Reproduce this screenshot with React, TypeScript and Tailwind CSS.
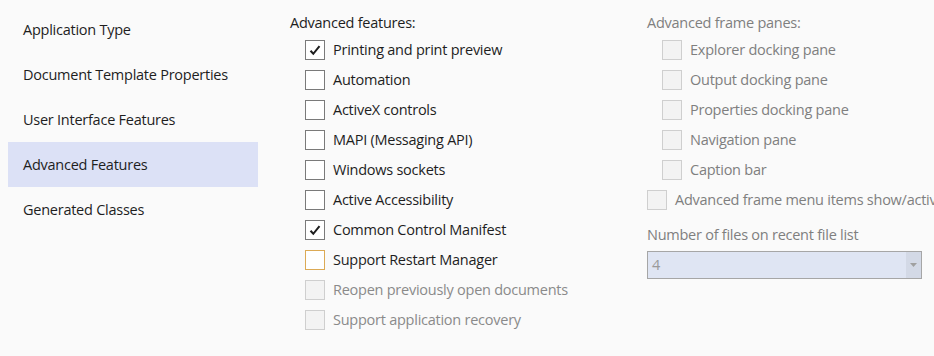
import React from "react";

const navItems = [
  "Application Type",
  "Document Template Properties",
  "User Interface Features",
  "Advanced Features",
  "Generated Classes",
];

type Opt = { label: string; checked?: boolean; disabled?: boolean; focus?: boolean };

const features: Opt[] = [
  { label: "Printing and print preview", checked: true },
  { label: "Automation" },
  { label: "ActiveX controls" },
  { label: "MAPI (Messaging API)" },
  { label: "Windows sockets" },
  { label: "Active Accessibility" },
  { label: "Common Control Manifest", checked: true },
  { label: "Support Restart Manager", focus: true },
  { label: "Reopen previously open documents", disabled: true },
  { label: "Support application recovery", disabled: true },
];

const panes = [
  "Explorer docking pane",
  "Output docking pane",
  "Properties docking pane",
  "Navigation pane",
  "Caption bar",
];

function Box({ checked, disabled, focus }: { checked?: boolean; disabled?: boolean; focus?: boolean }) {
  const cls = disabled
    ? "border-[#cfcfcf] bg-[#f3f3f3]"
    : focus
    ? "border-[#dcaa55] bg-white"
    : "border-[#7a7a7a] bg-white";
  return (
    <div className={`w-[20px] h-[20px] border flex items-center justify-center shrink-0 ${cls}`}>
      {checked && (
        <svg width="12" height="11" viewBox="0 0 12 11">
          <path d="M1.5 5.8 L4.3 8.8 L10.5 1.2" fill="none" stroke="#1e1e1e" strokeWidth="2" />
        </svg>
      )}
    </div>
  );
}

function CheckRow({ opt }: { opt: Opt }) {
  return (
    <div className="h-[30px] flex items-center gap-[8px]">
      <Box checked={opt.checked} disabled={opt.disabled} focus={opt.focus} />
      <span className={opt.disabled ? "text-[#8a8a8a]" : "text-[#1e1e1e]"}>{opt.label}</span>
    </div>
  );
}

export default function App() {
  return (
    <div
      className="w-[934px] h-[356px] bg-[#fafafa] flex overflow-hidden text-[14.5px] tracking-[-0.25px] whitespace-nowrap"
      style={{ fontFamily: '"Open Sans", "Noto Sans", sans-serif' }}
    >
      {/* left nav */}
      <div className="w-[258px] pl-[8px] pt-[7px] flex flex-col shrink-0">
        {navItems.map((item) => (
          <div
            key={item}
            className={`h-[45px] pl-[15px] flex items-center text-[#1e1e1e] ${item === "Advanced Features" ? "bg-[#dce1f6]" : ""}`}
          >
            {item}
          </div>
        ))}
      </div>

      {/* middle column */}
      <div className="w-[356px] pl-[32px] pt-[11px] shrink-0">
        <div className="h-[24px] flex items-center text-[#1e1e1e]">Advanced features:</div>
        <div className="pl-[15px]">
          {features.map((f) => (
            <CheckRow key={f.label} opt={f} />
          ))}
        </div>
      </div>

      {/* right column */}
      <div className="pl-[33px] pt-[11px] flex-1 text-[#7f7f7f]">
        <div className="h-[24px] flex items-center">Advanced frame panes:</div>
        <div className="pl-[15px]">
          {panes.map((p) => (
            <div key={p} className="h-[30px] flex items-center gap-[8px]">
              <Box disabled />
              <span>{p}</span>
            </div>
          ))}
        </div>
        <div className="h-[30px] flex items-center gap-[8px]">
          <Box disabled />
          <span>Advanced frame menu items show/activation</span>
        </div>
        <div className="mt-[8px] h-[24px] flex items-center">Number of files on recent file list</div>
        <div className="mt-[4px] w-[275px] h-[28px] border border-[#a6a6a6] bg-[#dfe5f3] flex">
          <div className="flex-1 pl-[4px] flex items-center text-[#9a9a9a]">4</div>
          <div className="w-[15px] bg-[#d3d9e6] flex items-center justify-center">
            <svg width="7" height="4" viewBox="0 0 7 4">
              <path d="M0 0 L7 0 L3.5 4 Z" fill="#a0a0a0" />
            </svg>
          </div>
        </div>
      </div>
    </div>
  );
}
